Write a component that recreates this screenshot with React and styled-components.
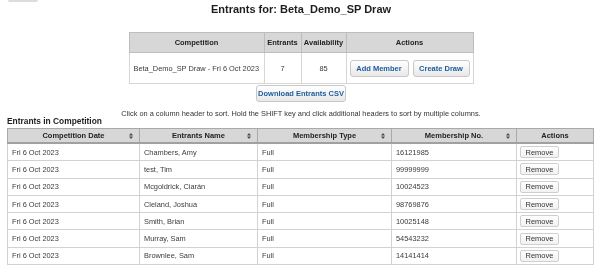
import React from 'react';
import styled, { createGlobalStyle } from 'styled-components';

const GlobalStyle = createGlobalStyle`
  body {
    margin: 0;
    background: #fff;
    font-family: "Liberation Sans", Arial, sans-serif;
    color: #333;
    -webkit-font-smoothing: antialiased;
  }
`;

const Page = styled.div`
  width: 602px;
  padding: 0 7px;
  box-sizing: border-box;
  will-change: transform;
`;

const BackStub = styled.div`
  width: 30px;
  height: 2px;
  margin-left: 1px;
  background: #dcdcdc;
  border-radius: 0 0 2px 2px;
`;

const Title = styled.h1`
  margin: 0;
  text-align: center;
  font-size: 11px;
  line-height: 14px;
  font-weight: bold;
  color: #1e1e1e;
`;

const SummaryTable = styled.table`
  border-collapse: collapse;
  table-layout: fixed;
  width: 344px;
  margin: 16px auto 0;
  font-size: 7.4px;
  color: #3a3a3a;

  th {
    height: 19px;
    padding: 0 2px;
    background: #d7d7d7;
    border: 1px solid #bdbdbd;
    font-size: 7.5px;
    font-weight: bold;
    color: #222;
    text-align: center;
  }
  td {
    height: 30px;
    padding: 0 4px;
    border: 1px solid #d6d6d6;
    text-align: center;
  }
  td:first-child {
    text-align: left;
  }
`;

const ActionCell = styled.td`
  && {
    padding: 0 2px;
  }
`;

const ActionButtons = styled.div`
  display: flex;
  gap: 4px;
  justify-content: center;
`;

const BlueButton = styled.button`
  height: 17px;
  width: ${p => p.$w}px;
  padding: 0;
  border: 1px solid #c8c8c8;
  border-radius: 3px;
  background: linear-gradient(#ffffff, #e8e8e8);
  font-family: "Liberation Sans", Arial, sans-serif;
  font-size: 7.5px;
  font-weight: bold;
  color: #1d5c9e;
  cursor: pointer;
`;

const Center = styled.div`
  display: flex;
  justify-content: center;
  margin-top: 1px;
`;

const Hint = styled.p`
  margin: 8px 0 0;
  text-align: center;
  font-size: 7.4px;
  line-height: 8px;
  color: #333;
`;

const Caption = styled.div`
  font-size: 8.4px;
  line-height: 7px;
  font-weight: bold;
  color: #1e1e1e;
`;

const EntrantsTable = styled.table`
  border-collapse: collapse;
  table-layout: fixed;
  width: 586px;
  margin-top: 3px;
  font-size: 7.4px;
  color: #3a3a3a;

  th {
    position: relative;
    height: 13px;
    padding: 0 4px;
    background: #d7d7d7;
    border: 1px solid #a9a9a9;
    border-bottom: 2px solid #a0a0a0;
    font-size: 7.5px;
    font-weight: bold;
    color: #222;
    text-align: center;
  }
  td {
    height: 16.3px;
    padding: 0 4px;
    border: 1px solid #d2d2d2;
    text-align: left;
  }
`;

const SortMark = styled.svg`
  position: absolute;
  right: 6px;
  top: 50%;
  margin-top: -3px;
`;

const RemoveButton = styled.button`
  display: block;
  width: 39px;
  height: 12px;
  padding: 0;
  margin-left: -1px;
  border: 1px solid #cfcfcf;
  border-radius: 2px;
  background: linear-gradient(#ffffff, #f1f1f1);
  font-family: "Liberation Sans", Arial, sans-serif;
  font-size: 7.5px;
  color: #333;
  cursor: pointer;
`;

const SortIcon = () => (
  <SortMark width="4" height="6" viewBox="0 0 4 6">
    <path d="M2 0 L4 2.4 L0 2.4 Z M2 6 L4 3.6 L0 3.6 Z" fill="#4a4a4a" />
  </SortMark>
);

const entrants = [
  ['Chambers, Amy', '16121985'],
  ['test, Tim', '99999999'],
  ['Mcgoldrick, Ciarán', '10024523'],
  ['Cleland, Joshua', '98769876'],
  ['Smith, Brian', '10025148'],
  ['Murray, Sam', '54543232'],
  ['Brownlee, Sam', '14141414'],
];

const columns = [
  { label: 'Competition Date', width: 132, sort: true },
  { label: 'Entrants Name', width: 118, sort: true },
  { label: 'Membership Type', width: 134, sort: true },
  { label: 'Membership No.', width: 125, sort: true },
  { label: 'Actions', width: 77, sort: false },
];

const summaryColumns = [
  { label: 'Competition', width: 135 },
  { label: 'Entrants', width: 37 },
  { label: 'Availability', width: 45 },
  { label: 'Actions', width: 127 },
];

export default function App() {
  return (
    <Page>
      <GlobalStyle />
      <BackStub />
      <Title>Entrants for: Beta_Demo_SP Draw</Title>

      <SummaryTable>
        <colgroup>
          {summaryColumns.map(c => (
            <col key={c.label} style={{ width: c.width }} />
          ))}
        </colgroup>
        <thead>
          <tr>
            {summaryColumns.map(c => (
              <th key={c.label}>{c.label}</th>
            ))}
          </tr>
        </thead>
        <tbody>
          <tr>
            <td>Beta_Demo_SP Draw - Fri 6 Oct 2023</td>
            <td>7</td>
            <td>85</td>
            <ActionCell>
              <ActionButtons>
                <BlueButton $w={59}>Add Member</BlueButton>
                <BlueButton $w={57}>Create Draw</BlueButton>
              </ActionButtons>
            </ActionCell>
          </tr>
        </tbody>
      </SummaryTable>

      <Center>
        <BlueButton $w={90}>Download Entrants CSV</BlueButton>
      </Center>

      <Hint>
        Click on a column header to sort. Hold the SHIFT key and click additional headers to sort by multiple columns.
      </Hint>
      <Caption>Entrants in Competition</Caption>

      <EntrantsTable>
        <colgroup>
          {columns.map(c => (
            <col key={c.label} style={{ width: c.width }} />
          ))}
        </colgroup>
        <thead>
          <tr>
            {columns.map(c => (
              <th key={c.label}>
                {c.label}
                {c.sort && <SortIcon />}
              </th>
            ))}
          </tr>
        </thead>
        <tbody>
          {entrants.map(([name, number]) => (
            <tr key={number}>
              <td>Fri 6 Oct 2023</td>
              <td>{name}</td>
              <td>Full</td>
              <td>{number}</td>
              <td>
                <RemoveButton>Remove</RemoveButton>
              </td>
            </tr>
          ))}
        </tbody>
      </EntrantsTable>
    </Page>
  );
}
